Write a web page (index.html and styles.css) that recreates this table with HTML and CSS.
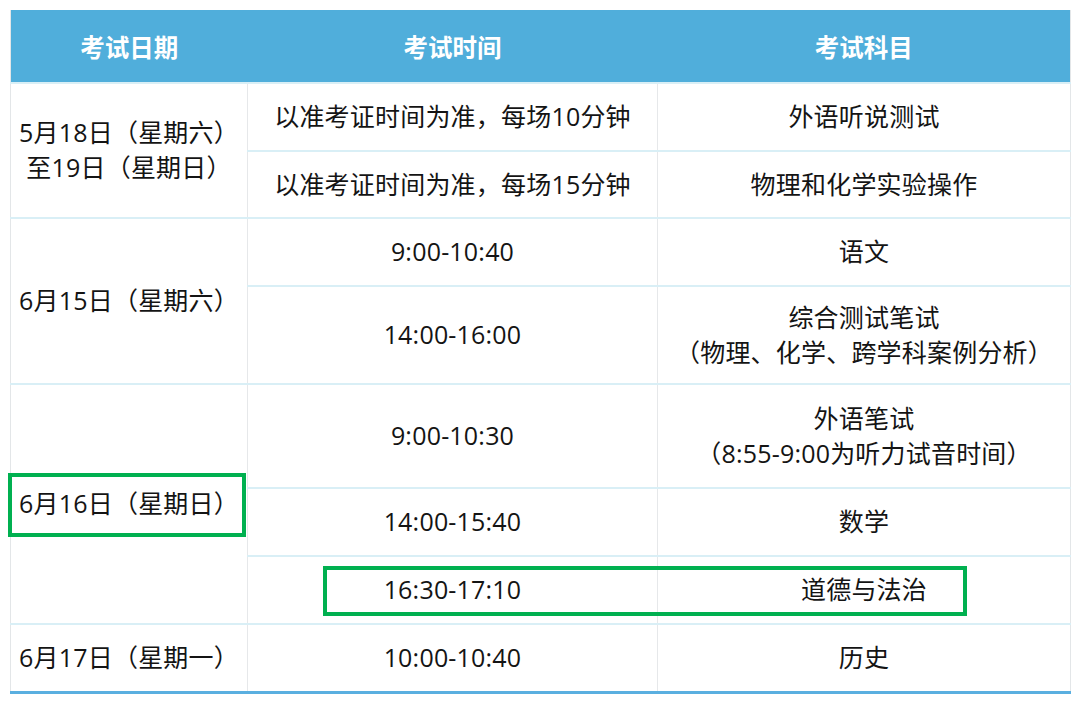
FILE: index.html
```html
<!DOCTYPE html>
<html lang="zh-CN">
<head>
<meta charset="utf-8">
<link rel="stylesheet" href="styles.css">
</head>
<body>
<div class="page">
  <table class="schedule">
    <colgroup>
      <col class="c-date">
      <col class="c-time">
      <col class="c-subj">
    </colgroup>
    <thead>
      <tr class="head">
        <th>考试日期</th>
        <th>考试时间</th>
        <th>考试科目</th>
      </tr>
    </thead>
    <tbody>
      <tr class="r68">
        <td rowspan="2" class="date">5月18日（星期六）<br>至19日（星期日）</td>
        <td>以准考证时间为准，每场10分钟</td>
        <td>外语听说测试</td>
      </tr>
      <tr class="r67">
        <td>以准考证时间为准，每场15分钟</td>
        <td>物理和化学实验操作</td>
      </tr>
      <tr class="r68">
        <td rowspan="2" class="date">6月15日（星期六）</td>
        <td>9:00-10:40</td>
        <td>语文</td>
      </tr>
      <tr class="r98">
        <td>14:00-16:00</td>
        <td>综合测试笔试<br>（物理、化学、跨学科案例分析）</td>
      </tr>
      <tr class="r104">
        <td rowspan="3" class="date">6月16日（星期日）</td>
        <td>9:00-10:30</td>
        <td>外语笔试<br>（8:55-9:00为听力试音时间）</td>
      </tr>
      <tr class="r68">
        <td>14:00-15:40</td>
        <td>数学</td>
      </tr>
      <tr class="r68">
        <td>16:30-17:10</td>
        <td>道德与法治</td>
      </tr>
      <tr class="r68 last">
        <td class="date">6月17日（星期一）</td>
        <td>10:00-10:40</td>
        <td>历史</td>
      </tr>
    </tbody>
  </table>
  <div class="mark mark-date"></div>
  <div class="mark mark-row"></div>
</div>
</body>
</html>
```

FILE: styles.css
```css
html, body {
  margin: 0;
  padding: 0;
  background: #ffffff;
}

.page {
  position: relative;
  padding: 10px;
  width: 1060px;
  font-family: "Open Sans", "Noto Sans CJK SC", sans-serif;
  color: #141414;
}

.schedule {
  width: 1060px;
  border-collapse: collapse;
  table-layout: fixed;
  border-left: 1px solid #e3e6e8;
  border-right: 1px solid #e3e6e8;
}

.c-date { width: 237px; }
.c-time { width: 410px; }
.c-subj { width: 413px; }

.head th {
  height: 72px;
  padding: 0;
  background: #50aedb;
  color: #ffffff;
  font-family: "Noto Sans CJK SC", sans-serif;
  font-size: 24.5px;
  font-weight: 700;
  text-align: center;
  vertical-align: middle;
  border: none;
}

.schedule td {
  padding: 0 0 1px;
  font-size: 25px;
  line-height: 35px;
  letter-spacing: 0.2px;
  text-align: center;
  vertical-align: middle;
  border-top: 2px solid #d9eff6;
  border-left: 1px solid #e6e8ea;
}

.schedule td.date {
  border-left: none;
}

.r67 td { height: 64px; }
.r68 td { height: 65px; }
.r98 td { height: 95px; }
.r104 td { height: 101px; }

.last td {
  border-bottom: 3px solid #5aafe0;
}

.mark {
  position: absolute;
  border: 4px solid #00b050;
  box-sizing: border-box;
}

.mark-date {
  left: 8px;
  top: 473px;
  width: 238px;
  height: 64px;
}

.mark-row {
  left: 323px;
  top: 566px;
  width: 644px;
  height: 50px;
}
```
